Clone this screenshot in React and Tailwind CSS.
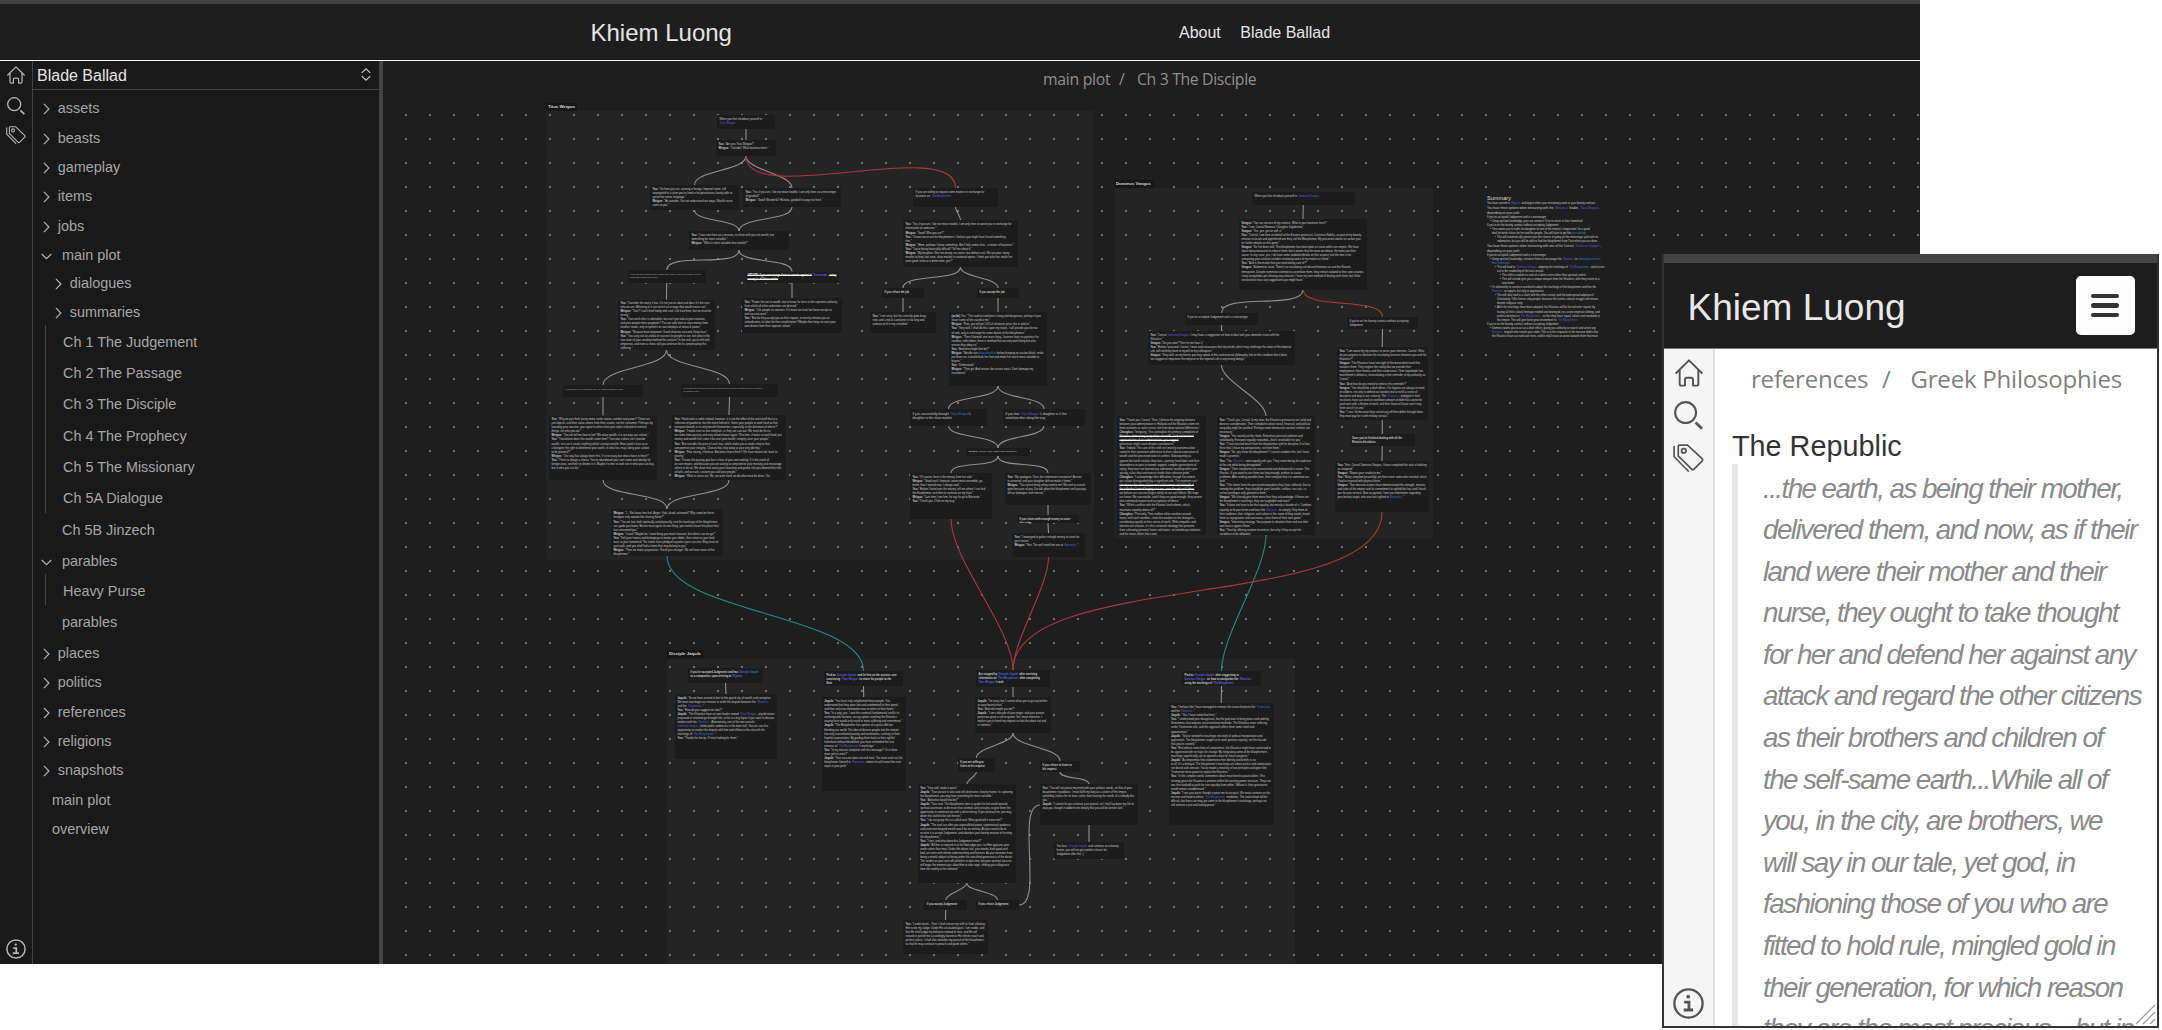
import React from "react";

/* ---------- icons ---------- */

function HouseIcon({ className }) {
  return (
    <svg viewBox="0 0 18 18" className={className} fill="none" stroke="currentColor" strokeWidth="1.25" strokeLinejoin="round" strokeLinecap="round">
      <path d="M0.8 9 L9 0.9 L17.2 9" />
      <path d="M3 7.4 V16 Q3 17.1 4.1 17.1 H6.4 V13.4 Q6.4 12.1 7.7 12.1 H10.3 Q11.6 12.1 11.6 13.4 V17.1 H13.9 Q15 17.1 15 16 V7.4" />
    </svg>
  );
}

function SearchIcon({ className }) {
  return (
    <svg viewBox="0 0 18 18" className={className} fill="none" stroke="currentColor" strokeWidth="1.3">
      <circle cx="7.2" cy="7.2" r="6.5" />
      <path d="M13.4 13.4 L17.4 17.2" strokeWidth="1.7" />
    </svg>
  );
}

function TagIcon({ className }) {
  return (
    <svg viewBox="0 0 20 18" className={className} fill="none" stroke="currentColor" strokeWidth="1.1" strokeLinejoin="round" strokeLinecap="round">
      <path d="M3.4 1.6 Q3.4 0.7 4.3 0.7 H9.4 L18.9 9.6 Q19.4 10.2 18.9 10.8 L13.4 16.4 Q12.8 16.9 12.2 16.3 L3.4 7.6 Z" />
      <path d="M0.7 1.7 V8.2 L9.8 17.4" />
      <circle cx="7" cy="4.4" r="1.5" />
    </svg>
  );
}

function InfoIcon({ className }) {
  return (
    <svg viewBox="0 0 20 20" className={className} fill="none" stroke="currentColor">
      <circle cx="10" cy="10" r="9.1" strokeWidth="1.5" />
      <circle cx="9.8" cy="5.6" r="1.2" fill="currentColor" stroke="none" />
      <path d="M7.2 9.1 H10.3 V14 M6.9 14.2 H13" strokeWidth="1.8" />
    </svg>
  );
}

function ChevronRight() {
  return (
    <svg viewBox="0 0 8 13" className="h-3 w-[7.4px] text-[#b4b4b4]" fill="none" stroke="currentColor" strokeWidth="1.3">
      <path d="M1 1 L6.4 6.5 L1 12" />
    </svg>
  );
}

function ChevronDown() {
  return (
    <svg viewBox="0 0 12 7" className="h-[7px] w-[11px] text-[#b4b4b4]" fill="none" stroke="currentColor" strokeWidth="1.3">
      <path d="M0.8 0.8 L6 5.8 L11.2 0.8" />
    </svg>
  );
}

/* ---------- file tree ---------- */

const F = "h-[29.33px]";
const G = "h-[31.33px]";

const TOP_ROWS = [
  ["closed", "assets", F],
  ["closed", "beasts", F],
  ["closed", "gameplay", F],
  ["closed", "items", F],
  ["closed", "jobs", F],
  ["open", "main plot", "h-[27.7px]"],
  ["nested", "dialogues", F],
  ["nested", "summaries", "h-[29.6px]"],
];
const CHAPTERS = [
  "Ch 1 The Judgement",
  "Ch 2 The Passage",
  "Ch 3 The Disciple",
  "Ch 4 The Prophecy",
  "Ch 5 The Missionary",
  "Ch 5A Dialogue",
];
const BOTTOM_ROWS = [
  ["closed", "places", F],
  ["closed", "politics", F],
  ["closed", "references", F],
  ["closed", "religions", F],
  ["closed", "snapshots", F],
  ["root", "main plot", F],
  ["root", "overview", F],
];

const INDENT = {
  closed: "pl-[9.5px]",
  nested: "pl-[21.5px]",
  open: "pl-[7.5px]",
  leaf: "pl-[29px]",
  root: "pl-[19px]",
};

function TreeRow({ kind, label, height }) {
  return (
    <div className={`flex items-start pt-[5px] ${INDENT[kind]} ${height}`}>
      {(kind === "closed" || kind === "nested") && (
        <span className="flex h-[25px] w-[15.3px] shrink-0 items-center pt-[1px]">
          <ChevronRight />
        </span>
      )}
      {kind === "open" && (
        <span className="flex h-[25px] w-[21.5px] shrink-0 items-center pt-[2px]">
          <ChevronDown />
        </span>
      )}
      <span className="leading-6">{label}</span>
    </div>
  );
}

function Branch({ items }) {
  return (
    <div className="ml-[12px] border-l border-[#444]">
      {items.map((t) => (
        <div key={t} className={`pl-[17px] pt-[5px] leading-6 ${G}`}>
          {t}
        </div>
      ))}
    </div>
  );
}

/* ---------- canvas data ---------- */

// Markup in lines: *bold*, [note link], {file link}, ~marked~ ; a leading ">" opens a slightly larger gap.
const CARDS = {
  A: [717, 115, 58, 14, ["When you first introduce yourself to", "[Titus Weiguo]"]],
  B: [716, 140, 60, 16, ['*You:* "Are you Titus Weiguo?"', '*Weiguo:* "Outsider! What business here."']],
  C: [650, 185, 89, 25, ['*You:* "So here you are, wearing a foreign, Imperial name, still', "segregated to a slum you've lived in for generations, barely able to", 'speak the native language."', '*Weiguo:* "An outsider, You not understand our ways. Wealth never', 'come to you."']],
  D: [743, 188, 98, 19, ['*You:* "Yes, if you are, I do not mean trouble, I am only here as a messenger', 'of goodwill."', '*Weiguo:* "Good! Wonderful! Hahaha, goodwill no pay rice here."']],
  E: [913, 188, 85, 19, ["If you are willing to request some matters in exchange for", "locations on  [The Blasphemer]"]],
  F: [689, 231, 100, 19, ['*You:* "I was sent here on a mission, to share with you not wealth, but', 'something far more valuable."', '*Weiguo:* "What is more valuable than wealth?"']],
  G: [903, 220, 115, 47, ['*You:* "Yes, if you are, I do not mean trouble, I am only here to assist you in exchange for', 'information on someone."', '>*Weiguo:* "Good! Who you are?"', '*You:* "I know traces are for blasphemers. I believe you might have heard something', 'him."', '*Weiguo:* "Hmm, perhaps I know something. But I help comes first... a matter of business."', '*You:* "You\'re being financially difficult? Tell me about it."', '*Weiguo:* "My daughter. She not strong, no career, but debtors ask. We too poor, many', "mouths to feed, but soon, slave market in eastward opens. I think you take her, make her", 'work good, to be at a better time, yes?"']],
  H: [627.5, 270, 78.5, 12.5, ["If you take the spiritual route of Judgement, that is, that of the empire, getting", "knowledge through our needs."], "sm"],
  I: [745, 271.5, 94, 11.5, ["~UPDATE: If you encourage them to remain against it~  [Triumvirate] , ~using~", "~money is all there matter~"], "bold"],
  J: [882, 288, 42, 10, ["If you refuse the job"], "bold"],
  K: [977, 288, 42, 10, ["If you accept the job"], "bold"],
  L: [618, 299.5, 97, 50.5, ['*You:* "Consider the worry it has. It\'s not just an ideal and idea. It\'s the core', 'who we are. Believing in it can enrich us in ways that wealth never can."', '*Weiguo:* "Your? I can\'t feed family with soul. Life hard here, but we must be', 'strong."', '*You:* "Your work ethic is admirable, but can\'t you look at your situation,', "and your people more pragmatic? You are only here to raise money from", "another nation, only to spend it on vain displays of status & power.", '>*Weiguo:* "Respect most important. Good show we succeed. Keep face."', '*You:* "You carry out an ordeal of success for people to see, but what is the', "true state of your condition behind the curtains? In the end, you're left with", "emptiness, and even a cheat, will you continue the lie, perpetuating this", 'suffering."']],
  M: [742, 298, 100, 35, ['*You:* "Power lies not in wealth, but in know, for force is the supreme authority', 'from which all other authorities are derived."', '*Weiguo:* "Our people no warriors. If it mean we kind, but harm except us', 'and success work."', '*You:* "But do they accept you as their equals, or merely tolerate you as', "subordinates, to labor for their needs better? Maybe then long run over your", 'own drivers from their superior culture."']],
  N: [870, 312, 66, 21, ['*You:* "I am sorry, but I\'m currently quite busy', "now, and a trip to Lovelorne is too long and", 'arduous to fit in my schedule."']],
  O: [949, 312, 98, 74, ['*(aside)* You: "The road to Lovelorne is long and dangerous, perhaps if you', 'share some of the sacrifice me."', '*Weiguo:* "Fine, you will get 10% of whatever price she is sold at."', '*You:* "Very well, I shall do this, upon my return, I will provide you the tax', '>of sale, only in exchange for some details of the blasphemer."', '*Weiguo:* "Then if farmed, one more thing...learners have no patience for', "newbies, with elders, there is method that not only work fitting but also", 'ensure they obey us."', '*You:* "And what might that be?"', '*Weiguo:* "Needle use {slave shackles} before bringing on auction block, make', "put these on, it would back her feet and make her much more valuable to", 'buyers."', '*You:* "Understood."', '*Weiguo:* "Then go! And ensure she arrives intact. Don\'t damage my', 'investment."']],
  P: [563, 385, 80, 12, ["If you point out the strong but have no religion concept of labor"], "sm"],
  Q: [681, 384, 97, 13, ["If you point out the strong but have no weighting for people's satisfies more success in", "an endless cycle"], "sm"],
  R: [910, 409, 77, 16.5, ["If you successfully brought  [Titus Weiguo]'s", "daughter to the slave market"], "lg"],
  S: [1003, 409, 82, 16.5, ["If you free  [Titus Weiguo] 's daughter or if she", "somehow dies along the way"], "lg"],
  T: [966, 448, 64, 8, ['*Weiguo:* "Theory back, swan how profitable?"'], "tight"],
  U: [549, 415.5, 108, 64.5, ['*You:* "Why do you think luxury items confer status, comfort and power? These are', "just objects, and their value comes from their creator, not the consumer. Perhaps, by", "hoarding your success, you signal to others that your value is based of external", 'things, not who you are."', '*Weiguo:* "You not tell me how to live! We value wealth, it is our way, our culture."', '*You:* "You believe does this wealth come from? Your own culture can\'t provide', ">wealth, nor can it create anything which conveys wealth. How could it treat so to", "a foreigner the right to determine your worth, in what lies, may I deny your culture", 'to be proud of?"', '*Weiguo:* "Our way has always been this. It is not easy, but what choice is there?"', '*You:* "There is always a choice. You\'ve abandoned your own name and identity for', "foreign ones, and feel no shame in it. Maybe it's time to seek not in what you can buy,", 'but in who you can be."']],
  V: [672, 415, 114, 65, ['*You:* "Hard work is noble indeed, however, it is not the effort of the work itself that is a', "reflection of goodness, but the intent behind it. Given your people to work hard so that", 'everyone benefit, or to only benefit themselves, especially at the detriment of others?"', '*Weiguo:* "I make sure no one complain, or they are cast out. We must do this to', "we come from poverty, and very afraid of poor again. This time, if make us work hard, put", 'money and wealth first, even it be over your health, integrity, over your people."', '>*You:* "But consider the price of such fear, which make you to make choices that', 'compromise your integrity. Choices that strip away at your very identity."', '*Weiguo:* "Fear strong, it bind us. But what choice there? We have means fail, back to', 'poverty."', '*You:* "I know, the poverty you face is fear of your own making. It is the result of', "on vain means, and because you are asking to compromise your morality and encourage", "others to do so. We share less every your treachery and greed, that you blamed their fall", 'of faith, and so such, consent you and your people."', '*Weiguo:* "What is worse we. We, we work hard, we do what must be done. Our']],
  W: [910, 473, 82, 46, ['*You:* "Of course, here is the money from her sale."', '*Weiguo:* "Good work, however, owner must ensemble, go', 'better than I owned now, I always said."', '*You:* "Before I hand over the money, tell me where I can find', 'the blasphemer, and then to continue on my hunt."', '*Weiguo:* "Last time I see him, he say he go to Barrenite."', '*You:* "Thank you, I\'ll be on my way."']],
  X: [1005, 473, 86, 32, ['*You:* "My apologies, Titus, but unforeseen transience! Access', 'is cornered, and your daughter did not make it home."', '*Weiguo:* "You cannot bring ruling seed to me! We end so events', "gone because of you. Do talk about the blasphemer until you pay", 'off our damages, with interest."']],
  Y: [1017, 515, 62, 8, ["If you return with enough money to cover", "this today"], "bold"],
  Z: [1012, 533, 73, 24, ['*You:* "I managed to gather enough money to cover for', 'your losses."', '*Weiguo:* "Fair. The well need him see at  [Barrenite] ."']],
  AA: [611, 509, 112, 47, ['*Weiguo:* "I... Not know how feel. Anger, Sad, afraid, ashamed? Why came be these', 'foreigner only awards like sharing flame?"', '>*You:* "You are lost, both spiritually and physically, and the teachings of the blasphemer', "can guide you home. But we must agree on one thing, you need to leave this place that", 'has consumed you."', '*Weiguo:* "Leave? Maybe be. I want bring you much treasure, but where can we go?"', '*You:* "Sell your homes and belongings to matter your debts, then return to your land', "east, to your homeland. The stolen have pledged to protect your success. May never to", 'your path, and you shall find a home that may belong to you."', '*Weiguo:* "Then we make preparation. Thank you stranger. We will learn more of this', 'blasphemer."']],
  a: [1252, 192, 102.5, 13, ["When you first introduce yourself to  [Dominus Vangus]"]],
  b: [1239, 219, 128, 70.5, ['*Vangus:* "You are not one of my citizens. What is your business here?"', '*You:* "I am, Consul Nameas Changkus Digidesimo."', '*Vangus:* "Yes, yes, get on with it."', '*You:* "Consul, I am here on behalf of the Eastern provinces, Convictus Nobilis, as part of my bounty', "mission to locate and apprehend one they call the Blasphemer. My proconsul advise to contact you", 'for further details on this quest."', '*Vangus:* "So I\'ve been told. This blasphemer has been quite an issue within our empire. We have', "taken many measures to silence them, but it seems that the more we detest, the more join their", "cause. In any case, yes, I do have some outdated details on this suspect, but the time is far", 'competing your contract includes reviewing some of my matters at hand."', '*You:* "And is this matter that you need taking care of?"', '*Vangus:* "A domestic issue. There\'s an escalating civil discord between us and the Khaistic', ">immigrants. Despite numerous attempts to assimilate them, they remain isolated to their own creases,", "citing xenophobia yet refusing any outreach. I have my own method of dealing with them, but I'd be", 'interested to hear any suggestions you might have."']],
  c: [1185, 313, 73, 12, ["If you've accepted Judgement and is a messenger"]],
  d: [1148, 331, 147, 34, ['*You:* "Consul  [Dominus Vangus] , I may have a suggestion on how to deal with your domestic issue with the', 'Khaistics."', '*Vangus:* "Do you now? Then let me hear it."', '*You:* "Before I proceed, Consul, I must seek assurance that my words, which may challenge the views of the imperial', 'cult, will not bring harm to myself or my colleagues."', '*Vangus:* "Very well, on my honor, you may speak of this controversial philosophy, but on the condition that it does', 'not suggest or imposture the emperor or the imperial cult in any wrong doings."']],
  e: [1347, 317, 71, 12, ["If you're on the bounty contract without accepting", "Judgement"]],
  f: [1337, 347, 90.5, 73, ['*You:* "I am aware by my contract to serve your interests, Consul. What', "do you propose to alleviate the escalating tensions between you and the", 'Khaistics?"', '*Vangus:* "The Khaistics have lost sight of the benevolent hand that', "sustains them. They neglect the reality that we provide their", "employment, their homes, and their sustenance. Their ingratitude has", "manifested in defiance, necessitating a firm reminder of my authority as", 'Consul."', '>*You:* "And how do you intend to enforce this reminder?"', '*Vangus:* "You should be a draft officer. Our legions are always in need', "of soldiers, not only to defend our borders but to instill a sense of", "discipline and duty in our citizenry. The  [Khaistics] , indulged in their", "excesses, have accrued an exorbitant amount of debt that cannot be", "paid even with a lifetime of work, and their financial future won't stay", 'them out of it is one."', '*You:* "I see. So because they cannot pay off their debts through labor,', 'they must pay for it with military service."']],
  g: [1349.5, 434, 65.5, 12, ["Once you've finished dealing with all the", "Khaistic dissidents"], "bold"],
  h: [1335, 461, 94, 51, ['*You:* "Sire, Consul Dominus Vangus, I have completed the task of drafting', 'as assigned."', '*Vangus:* "Report your results to me."', '*You:* "Many complied peacefully, yet there were some who resisted, which', 'I had to respond with physical force."', '*Vangus:* "Your decisive actions have demonstrated the strength, mission,', "and valor of the empire and its commitment to uphold the law, and I thank", "you for your service. Now as agreed, I owe you information regarding", 'your bounty target, who was last sighted at  [Barrenite] ."']],
  i: [1117, 416, 89, 119, ['*You:* "Thank you, Consul. Then, I believe the ongoing tensions', "between your administration in Holland and the Khaistics stem not", 'from economic or sales issues, but from deep spiritual differences."', '*Changkus:* "Intriguing. This contradicts the primary complaints of', "~Khaistics, bemoaning inequalities of wealth, land and material~", "~representation of our administration, you suggest~", 'grievances might reach deeper connotations."', '*You:* "Indeed. The core of this shift isn\'t merely economical but', "rooted in their persistent adherence to their cultural association of", "wealth and the perceived status it confers. Subsequently as", ">against the harsh realities they face—poverty, hard labor, and their", "dependence on your economic support, compiler generations of", "trying, they have not learned any substantial standing within your", 'society, a fact that continues to evoke their cohesive pride."', '*Changkus:* "I acknowledge their difficulties, though I\'m evident', "our culture disregarded play a significant role. The expense can't", "~champions the virtue of personal achievement and strength of~", "~the individual toward forging success, even though such ideas~", "we believe our success forges solely on our own efforts. We forge", "our honor. We sow worlds, and if they are good enough, they sooner", 'else command respect and acceptance of others."', '*You:* "Which conflicts with the Khaistic land reforms, which', '>maintains equality above all?"', '*Changkus:* "Precisely. Their welfare ethos revolves around', "honor, with each member—from the weakest to the strongest—", "contributing equally to their sense of worth. While empathic and", "laments are virtuous, it is this constraint ideology that prevents", "from cultivating personal honor and worse, vicissitudinary initiatives", "and the many others that come"]],
  j: [1217, 416, 98, 119, ['*You:* "Thank you, Consul. In my view, the Khaistics grievances are valid and', "deserve consideration. Their complaints about social, financial, and political", "inequality might be justified. Perhaps some democratic societal reforms are", 'necessary."', '*Vangus:* "You sound just like them. Relentless personal ambition and', 'individuality. Everyone equally rewarded—that\'s unsolvable for you."', '*You:* "I have learned much from the blasphemer and his disciples. It is how', 'there that I share my perspectives, not from them."', '*Vangus:* "So, you know the blasphemer? I cannot condone this, but I have', 'made a promise."', '>*You:* "The  [Khaistics]  went equally with you. They resent being the audience', 'of the city while being disregarded."', '*Vangus:* "Their complaints are unwarranted and dishonored in nature. The', "Khaistic. If you want to coin them too long enough, profess to cause", "problems. After ending possible laws, then complain that it is somehow our", 'fault."', '*You:* "This stems from the perceived inequalities they have suffered, thus to', "remedy the problem, they should be given benefits, welfare, tax cuts, i.e.", 'certain privileges only granted to them."', '*Vangus:* "We already give them more than they acknowledge. If these are', 'the blasphemer\'s teachings, they are laughable and naive!"', '*You:* "It does not have to be that equality, but merely a facade of it. Combine', ">equality to fit your terms and force the  [Khaistics]  to comply. Strip them of", "their traditions, their religions, and culture in the name of they would, brand", 'them as repugnative and cancerous—treat them all their own game."', '*Vangus:* "Interesting strategy. You propose to dissolve them and use their', 'own tactics against them."', '*You:* "Start by offering random incentives, but only if they accept the', "conditions to be obligated"]],
  1: [688, 668, 75, 15, ["If you've accepted Judgement and has  [Disciple Jaquib]", "as a companion, upon arriving at  [Rijjanet]"], "bold"],
  2: [675, 694.3, 102, 64.7, ['*Jaquib:* "So we have arrived at last to this grand city of wealth and corruption.', "We must now begin our mission to settle the dispute between the  [Khaistics]", 'and the  [Triumvirate] ."', '*You:* "How do you suggest we start?"', '*Jaquib:* "The Khaistics have an own leader named  [Titus Weiguo] , any decisions', "proposed or resolved go through him, so he is a key figure if you want to discuss", "matters with the  [Khaistics] . Alternatively, one of the two consuls,", "[Dominus Vangus] , holds public audiences in the town hall. You can use this", "opportunity to resolve the dispute with him and influence the city with the", 'teachings of  [The Blasphemer] ."', '*You:* "Thanks for the tip. I\'ll start looking for them."']],
  3: [824, 671, 79, 15, ["Find as  [Disciple Jaquib]  and let him on the success over", "convincing  [Titus Weiguo]  to return his people to the", "East"], "bold"],
  4: [821.7, 697, 84, 93.7, ['*Jaquib:* "You have truly enlightened these people. You', "understood that they were lost and condemned to their greed,", 'and their only true redemption was to return to their home."', '*You:* "In a way, yes. I saw the continual fundamental conflict in', "unchangeable factions, so any option involving the Khaistics", 'staying here would only result in more suffering and resentment."', '*Jaquib:* "The Blasphemer has spoken of a great affliction', ">blending our world. The idea of diverse people into the empire", "has only exacerbated poverty and animosities, contrary to their", "hopeful expectations. By guiding them back to their rightful", "homeland without bloodshed, you have embodied the true", "essence of  [The Blasphemer]'s teachings.\"", '*You:* "Is my mission complete with this message? Or is there', 'more yet to come?"', '*Jaquib:* "Your success does not end here. You must seek out the', "blasphemer himself in  [Florennus] , where he will reveal the next", 'steps in your path."']],
  5: [976, 670, 74, 17, ["Are stopped by  [Disciple Jaquib]  after receiving", "information on  [The Blasphemer]  after completing", "[Titus Weiguo] 's task"], "bold"],
  6: [975, 697, 76, 36, ['*Jaquib:* "I\'m sorry, but I cannot allow you to go any further', 'on your bounty hunt."', '*You:* "And who might you be?"', '*Jaquib:* "I am a disciple of your target, and your pursuit', "poses too great a risk to ignore. So I must intervene. I", "implore you to heed my request so that this does not end", 'in violence."']],
  7: [957.7, 758, 37.3, 14, ["If you are willing to", "listen to his request"], "bold"],
  8: [1040, 761, 40, 11, ["If you refuse to listen to", "his request"], "bold"],
  9: [917.7, 784, 98.3, 99, ['*You:* "Very well, make it quick."', '*Jaquib:* "Your pursuit is vain and self-destructive, bounty hunter. In capturing', 'the blasphemer, you may lose something far more valuable."', '*You:* "And what would that be?"', '*Jaquib:* "Your soul. The blasphemer aims to guide his lost world towards', "spiritual ascension, to be more than animals and servants, to give them the", "opportunity to communicate with a divine being. If you destroy him, you may", 'doom this world to be lost forever."', '*You:* "I do not grasp this so-called soul. What good will it serve me?"', '>*Jaquib:* "The soul can offer you unparalleled power, supernatural guidance', "and protection beyond mortal reach for an eternity. All you need to do to", "receive it is accept Judgement, and abandon your bounty mission of hunting", 'the blasphemer."', '*You:* "I see, and what does this Judgement entail?"', '*Jaquib:* "All that is required is to let God judge you. Let Him appraise your', "worth rather than man. Under His divine rule, your deeds, both good and", "bad, are seen with infinite understanding and fairness. As you transition from", "being a mortal subject to being under the sanctified governance of the divine.", "The verdict on your soul will unfold in its due time, but your spiritual success", "will begin the moment you allow Him to take reign, shifting your allegiance", 'from the earthly to the ethereal."']],
  10: [1040, 784, 98, 40.6, ['*You:* "You will not poison my mind with your profane words, on that of your', "blasphemer repudiates. I must fulfill my duty as a citizen of the empire,", "upholding Justice for its laws, rather than hearing the words of a nobody like", 'you."', '*Jaquib:* "I cannot let you continue your pursuit, so I shall lay down my life to', 'stop you, though it saddens me deeply that you will be forever lost."']],
  11: [1054, 842, 70, 17, ["You face  [Disciple Jaquib]  and continue as a bounty", "hunter, you will not get another chance for", "Judgement after this :)"]],
  12: [924.3, 900, 42.7, 10, ["If you accept Judgement"], "bold"],
  13: [976, 900, 43, 10, ["If you refuse Judgement"], "bold"],
  14: [903, 920, 85, 34, ['*You:* "I understand... Then I shall entrust my faith to God, allowing', "Him to be my Judge. Under His unclouded gaze, I am visible, and", "that He shall judge my behavior instead of man, and He will", "reward or punish me accordingly, based on His infinite reach and", "perfect justice. I shall also abandon my pursuit of the blasphemer,", 'so that he may continue to preach and guide others."']],
  15: [1182, 671, 79, 15, ["Find as  [Disciple Jaquib]  after suggesting to", "[Dominus Vangus]  on how to manipulate the  [Khaistics]", "using the teachings of  [The Blasphemer]"], "bold"],
  16: [1168.5, 703.3, 105.5, 121.7, ['*You:* "I believe like I have managed to remove the issues between the  [Triumvirate]', 'and the  [Khaistics] ."', '*Jaquib:* "Yes, I have noted that here."', '*You:* "I understood your disapproval, but the goal was to bring peace and stability.', "Sometimes, that requires unconventional methods. The Khaistics were suffering", "under Triumvirate rule, and this approach offers them some relief and", '>opportunities."', '*Jaquib:* "You\'ve twisted his teachings into tools of political manipulation and', "oppression. The blasphemer taught us to seek genuine equality, not this facade", 'that you\'ve created."', '*You:* "But without some form of compromise, the Khaistics might have continued to', "be oppressed with no hope for change. By integrating some of the blasphemer's", 'teachings superficially, we\'ve opened a door for future progress."', '*Jaquib:* "A compromise that undermines their identity and beliefs is no', "at all. It's a betrayal. The blasphemer's teachings are about justice and compassion,", "not deceit and coercion. You've made a mockery of our principles and given the", 'Triumvirate more power to exploit the Khaistics."', '*You:* "In the complex world, sometimes ideals must bend to practicalities. This', ">strategy gives the Khaistics a position within the existing power structure. They can", "use this foothold to push for true equality from within. Without it, their grievances", 'would remain unaddressed."', '*Jaquib:* "I see your point, though it pains me to accept it. We must continue on the', "mission and head to where  [The Blasphemer]  meditates. The road ahead will be", "difficult, but there can may yet come to the blasphemer's teachings, perhaps we", 'still achieve a just and lasting peace."']],
};

const SUMMARY = [
  [0, "n", "You have arrived in  [Rijjanet]  and begun either your missionary work or your bounty contract."],
  [0, "l", "You have three options when interacting with the  [Khaistics]  leader,  [Titus Weiguo] ,"],
  [0, "l", "depending on your path"],
  [0, "n", "If you've accepted Judgement and is a messenger"],
  [1, "b", "Using spiritual knowledge, you can convince Titus to return to their homeland"],
  [0, "n", "If you're on the bounty contract without accepting Judgement"],
  [1, "b", "Titus wants you to traffic his daughter to one of the empire's 'emporiums' for a good"],
  [1, "", "deal for better future for her and his people. You will have to get the {proceedings}"],
  [2, "b", "This will automatically prevent you the chance of going on the messenger path with no"],
  [2, "", "redemption, but you will be able to find the blasphemer from Titus when you are done"],
  [0, "l", "You have three options when interacting with one of the Consul,  [Dominus Vangus] ,"],
  [0, "l", "depending on your path"],
  [0, "n", "If you've accepted Judgement and is a messenger"],
  [1, "b", "Using spiritual knowledge, convince them to encourage the  [Khaistics]  to {voluntarily return to}"],
  [1, "", "{their homeland}"],
  [2, "b", "This will lead to  [Dominus Vangus]  adopting the teachings of  [The Blasphemer] , and access"],
  [2, "", "out to the readership of the last consuls"],
  [3, "b", "This shift is rooted in a sort of a latent curse rather than spiritual control"],
  [3, "b", "This will include give you a unique weapon from the Khaistics, after they return to a"],
  [3, "", "new home"],
  [1, "b", "Or alternately to convince overlord to adopt the teachings of the blasphemer and hire the"],
  [1, "", "[Khaistics]  as equals, but only in appearance"],
  [2, "b", "This will also lead to a clash with the other consul, and the widespread adoption of"],
  [2, "", "Christianity. Titles linears only people, because the Lorelai cultural struggle will remain,"],
  [2, "", "despite religious unity"],
  [2, "b", "After the teachings have been adopted, the Khaistics will be forced to be 'equals' by"],
  [2, "g", "having all their cultural heritage eroded and destroyed, no cuisine imperial clothing, and"],
  [2, "", "profess devotion to  [The Blasphemer] , so that they have 'equal' values and standards to"],
  [2, "", "the empire. This will give them great resentment to  [The Blasphemer]"],
  [0, "n", "If you're on the bounty contract without accepting Judgement"],
  [1, "b", "Dominus wants you to act as a draft officer, giving you authority to search and arrest any"],
  [1, "", "[Khaistics]  migrant who resists your order. This is in the response to the massive debts that"],
  [1, "", "the Khaistics have accrued over here, and he shall issue an arrow towards them that most"],
];

const EDGES = [
  ["A", "B"], ["B", "C"], ["B", "D"], ["B", "E", "red"], ["C", "F"], ["D", "F"], ["E", "G"],
  ["F", "H"], ["F", "I"], ["G", "J"], ["G", "K"], ["H", "L"], ["I", "M"], ["J", "N"], ["K", "O"],
  ["L", "P"], ["L", "Q"], ["P", "U"], ["Q", "V"], ["U", "AA"], ["V", "AA"], ["O", "R"], ["O", "S"],
  ["R", "T"], ["S", "T"], ["T", "W"], ["T", "X"], ["X", "Y"], ["Y", "Z"],
  ["a", "b"], ["b", "c"], ["b", "e", "red"], ["c", "d"], ["d", "j"], ["e", "f"], ["f", "g"], ["g", "h"],
  ["1", "2"], ["3", "4"], ["5", "6"], ["6", "7"], ["6", "8"], ["7", "9"], ["8", "10"], ["10", "11"],
  ["9", "12"], ["9", "13"], ["12", "14"], ["15", "16"],
  ["AA", "3", "teal"], ["j", "15", "teal"], ["W", "5", "red"], ["Z", "5", "red"], ["h", "5", "red"],
];

const STROKE = { grey: "#8f8f8f", red: "#ad3543", teal: "#1d8d85" };

function edgePath([from, to]) {
  const a = CARDS[from];
  const b = CARDS[to];
  const x1 = a[0] + a[2] / 2;
  const y1 = a[1] + a[3];
  const x2 = b[0] + b[2] / 2;
  const y2 = b[1];
  const k = Math.hypot(x2 - x1, y2 - y1) / 4;
  return `M${x1} ${y1} C${x1} ${y1 + k} ${x2} ${y2 - k} ${x2} ${y2}`;
}

function Rich({ text }) {
  return text.split(/(\*[^*]+\*|\[[^\]]+\]|\{[^}]+\}|~[^~]+~)/).map((part, i) => {
    const inner = part.slice(1, -1);
    if (part[0] === "*") return <b key={i}>{inner}</b>;
    if (part[0] === "[") return <span key={i} className="text-[#5560dd]">{inner}</span>;
    if (part[0] === "{") return <span key={i} className="text-[#2b7fe0]">{inner}</span>;
    if (part[0] === "~") return <span key={i} className="text-[#f0f0ec] line-through decoration-[1px]">{inner}</span>;
    return part;
  });
}

const SIZE = {
  sm: "pt-[2.5px] text-[2.1px] leading-[3px] text-[#b0b0b0]",
  lg: "pt-[2.5px] text-[3.1px] leading-[4px] text-[#c8c8c8]",
  bold: "pt-[2.5px] text-[2.6px] leading-[4px] font-bold text-[#cecece]",
  md: "pt-[2.5px] text-[2.72px] leading-[4px] text-[#cacaca]",
  tight: "pt-[2px] text-[2.4px] leading-[4px] text-[#cacaca]",
};

function Card({ data }) {
  const [left, top, width, height, lines, size = "md"] = data;
  return (
    <div
      className={`absolute overflow-hidden whitespace-pre rounded-[1px] bg-[#1c1c1c] pl-[2.5px] ${SIZE[size]}`}
      style={{ left, top, width, height }}
    >
      {lines.map((l, i) => (
        <div key={i} className={l[0] === ">" ? "pt-px" : ""}>
          <Rich text={l[0] === ">" ? l.slice(1) : l} />
        </div>
      ))}
    </div>
  );
}

const SUMMARY_INDENT = ["pl-0", "pl-[5px]", "pl-[10px]", "pl-[15px]"];
const SUMMARY_KIND = { l: "text-[3.1px] leading-[4.9px]", g: "pt-px" };

const GROUP_LABEL = "absolute rounded-[1px] bg-[#161616] px-[2px] text-[4.3px] font-bold leading-[8px] text-[#d8d8d8]";

function Board() {
  return (
    <div className="absolute -left-[383px] -top-[61px] h-[964px] w-[1920px]">
      <div className="absolute left-[546px] top-[111px] h-[449px] w-[548px] bg-[#242424]" />
      <div className="absolute left-[1114px] top-[188px] h-[350px] w-[319px] bg-[#242424]" />
      <div className="absolute left-[667px] top-[659px] h-[305px] w-[628px] bg-[#242424]" />
      <svg className="absolute left-0 top-0" width="1920" height="964" fill="none">
        <defs>
          <pattern id="dots" x="549" y="114" width="24" height="24" patternUnits="userSpaceOnUse">
            <rect width="2" height="2" fill="#707070" />
          </pattern>
        </defs>
        <rect x="384" y="98" width="1536" height="866" fill="url(#dots)" />
        {EDGES.map((e) => (
          <path key={e[0] + "-" + e[1]} d={edgePath(e)} stroke={STROKE[e[2] || "grey"]} strokeWidth="1.1" />
        ))}
        <path d="M1019 905 C1044 905 1015 805 1040 805" stroke={STROKE.grey} strokeWidth="1.1" />
      </svg>
      <div className={`${GROUP_LABEL} left-[546px] top-[103px]`}>Titus Weiguo</div>
      <div className={`${GROUP_LABEL} left-[1114px] top-[180px]`}>Dominus Vangus</div>
      <div className={`${GROUP_LABEL} left-[667px] top-[650px]`}>Disciple Jaquib</div>
      {Object.entries(CARDS).map(([id, data]) => (
        <Card key={id} data={data} />
      ))}
      <div className="absolute left-[1484px] top-[192px] h-[148px] w-[125px] overflow-hidden whitespace-pre bg-[#1e1e1e] pl-[3px] pt-[3px] text-[2.67px] leading-[4px] text-[#cacaca]">
        <div className="pb-[1px] text-[5.6px] leading-[6px] text-[#dcdcdc]">Summary</div>
        {SUMMARY.map(([depth, kind, text], i) => (
          <div key={i} className={`${SUMMARY_INDENT[depth]} ${SUMMARY_KIND[kind] || ""}`}>
            {kind === "b" && <span className="-ml-[2px] inline-block w-[2px]">•</span>}
            <Rich text={text} />
          </div>
        ))}
      </div>
    </div>
  );
}

/* ---------- desktop window ---------- */

function Desktop() {
  return (
    <div className="flex h-[964px] w-[1920px] flex-col overflow-hidden border-t-4 border-[#444] bg-[#1e1e1e]">
      <header className="flex h-[57px] shrink-0 items-center border-b border-[#f2f2f2] pt-[1px] text-[#e4e4e4]">
        <div className="ml-[590.5px] w-[588.5px] text-2xl">Khiem Luong</div>
        <nav className="flex gap-[19.5px] text-base">
          <span>About</span>
          <span>Blade Ballad</span>
        </nav>
      </header>
      <div className="flex min-h-0 flex-1">
        <aside className="flex w-[33px] shrink-0 flex-col items-center border-r border-[#444] bg-[#191919] pt-[5px] text-[#b4b4b4]">
          <HouseIcon className="h-[18px] w-[18px]" />
          <SearchIcon className="mt-[13px] h-[18px] w-[18px]" />
          <TagIcon className="mt-[11px] h-[18px] w-[20px]" />
          <InfoIcon className="mb-[5px] mt-auto h-5 w-5" />
        </aside>
        <section className="flex w-[346px] shrink-0 flex-col bg-[#191919]">
          <div className="flex h-[29px] items-center justify-between border-b border-[#444] pl-1 pr-2 text-[#e4e4e4]">
            <span className="pt-[1px] text-base">Blade Ballad</span>
            <svg viewBox="0 0 10 13" className="mb-[2px] h-[13px] w-[10px]" fill="none" stroke="#c8c8c8" strokeWidth="1.2">
              <path d="M0.7 4.9 L5 0.9 L9.3 4.9 M0.7 8.1 L5 12.1 L9.3 8.1" />
            </svg>
          </div>
          <div className="pt-[1.3px] text-[14.4px] text-[#a6a6a6]">
            {TOP_ROWS.map(([k, l, h]) => (
              <TreeRow key={l} kind={k} label={l} height={h} />
            ))}
            <Branch items={CHAPTERS} />
            <TreeRow kind="leaf" label="Ch 5B Jinzech" height={G} />
            <TreeRow kind="open" label="parables" height="h-[29.7px]" />
            <Branch items={["Heavy Purse"]} />
            <TreeRow kind="leaf" label="parables" height="h-[31px]" />
            {BOTTOM_ROWS.map(([k, l, h]) => (
              <TreeRow key={l} kind={k} label={l} height={h} />
            ))}
          </div>
        </section>
        <div className="w-1 shrink-0 bg-[#444]" />
        <main className="relative min-w-0 flex-1 overflow-hidden">
          <Board />
          <div className="relative flex h-9 items-center justify-center pr-[1px] pt-[1px] font-['Open_Sans','Noto_Sans',sans-serif] text-[15.8px] text-[#8e8e8e]">
            <span className="w-[67px] whitespace-nowrap tracking-[-0.3px]">main plot</span>
            <span className="ml-[9px] w-[18px]">/</span>
            <span className="w-[122px] whitespace-nowrap tracking-[-0.35px]">Ch 3 The Disciple</span>
          </div>
        </main>
      </div>
    </div>
  );
}

/* ---------- phone window ---------- */

const QUOTE = [
  "...the earth, as being their mother,",
  "delivered them, and now, as if their",
  "land were their mother and their",
  "nurse, they ought to take thought",
  "for her and defend her against any",
  "attack and regard the other citizens",
  "as their brothers and children of",
  "the self-same earth...While all of",
  "you, in the city, are brothers, we",
  "will say in our tale, yet god, in",
  "fashioning those of you who are",
  "fitted to hold rule, mingled gold in",
  "their generation, for which reason",
  "they are the most precious... but in",
];

function Phone() {
  return (
    <div className="absolute left-[1662px] top-[254px] flex h-[774px] w-[497px] flex-col border-2 border-t-0 border-[#333336] bg-white">
      <div className="h-[9px] shrink-0 bg-[#444]" />
      <header className="flex h-[86px] shrink-0 items-center justify-between border-b border-[#777] bg-[#1e1e1e] pl-[23.5px] pr-[22.5px]">
        <span className="pt-[3px] text-[37px] leading-none text-[#e8e8e8]">Khiem Luong</span>
        <span className="flex h-[59px] w-[59px] flex-col items-center justify-center gap-[5px] rounded-[5px] bg-[#fdfdfd]">
          <span className="h-[4.3px] w-7 rounded-full bg-[#333]" />
          <span className="h-[4.3px] w-7 rounded-full bg-[#333]" />
          <span className="h-[4.3px] w-7 rounded-full bg-[#333]" />
        </span>
      </header>
      <div className="flex min-h-0 flex-1">
        <aside className="flex w-[51px] shrink-0 flex-col items-center border-r-2 border-[#e0e0e0] bg-[#f5f5f5] pt-[10px] text-[#555]">
          <HouseIcon className="h-[28px] w-[28px]" />
          <SearchIcon className="mt-[14px] h-[29px] w-[29px]" />
          <TagIcon className="mt-[14px] h-[28px] w-[31px]" />
          <InfoIcon className="mb-[7px] mt-auto h-[31px] w-[31px]" />
        </aside>
        <main className="relative min-w-0 flex-1 overflow-hidden pl-[17px]">
          <div className="flex h-[60px] items-center whitespace-nowrap pl-[19px] font-['Open_Sans','Noto_Sans',sans-serif] text-[24px] text-[#808080]">
            <span className="w-[131px] tracking-[-0.2px]">references</span>
            <span className="w-[28.5px]">/</span>
            <span className="tracking-[-0.2px]">Greek Philosophies</span>
          </div>
          <h1 className="pt-[18px] text-[28.8px] leading-[38px] text-[#333]">The Republic</h1>
          <blockquote className="-mt-px whitespace-nowrap border-l-[6px] border-[#e6e6e6] pl-[25px] pt-[3.5px] text-[27.8px] italic leading-[41.6px] tracking-[-1.56px] text-[#8a8a8a]">
            {QUOTE.map((l) => (
              <div key={l}>{l}</div>
            ))}
          </blockquote>
          <svg className="absolute bottom-0 right-0" width="22" height="22" stroke="#9a9a9a" strokeWidth="1.2" fill="none">
            <path d="M1 20 L20 1 M8 20 L20 8 M15 20 L20 15" />
          </svg>
        </main>
      </div>
    </div>
  );
}

export default function App() {
  return (
    <div className="relative h-[1030px] w-[2162px] overflow-hidden bg-white font-['Liberation_Sans',Arial,sans-serif]">
      <Desktop />
      <Phone />
    </div>
  );
}
